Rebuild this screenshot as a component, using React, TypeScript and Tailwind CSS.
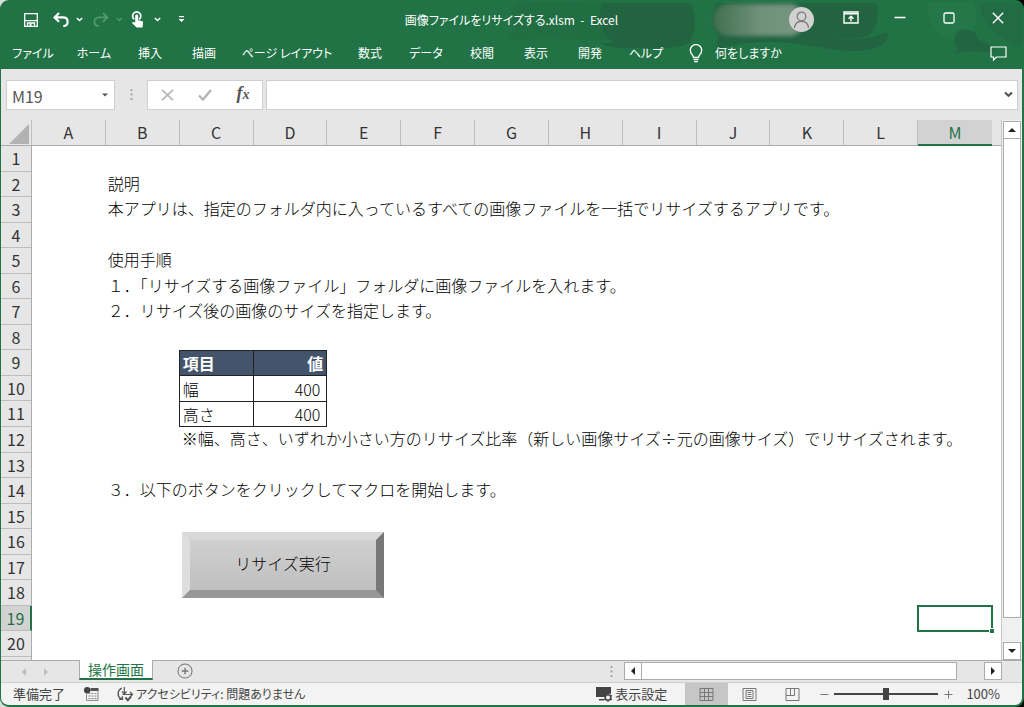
import type { ReactNode } from "react";

const COLUMNS = ["A", "B", "C", "D", "E", "F", "G", "H", "I", "J", "K", "L", "M"];
const ROWS = Array.from({ length: 20 }, (_, i) => i + 1);

const MENU = [
    { label: "ファイル", width: "w-16" },
    { label: "ホーム", width: "w-[58px]" },
    { label: "挿入", width: "w-[54px]" },
    { label: "描画", width: "w-[54px]" },
    { label: "ページ レイアウト", width: "w-28" },
    { label: "数式", width: "w-[54px]" },
    { label: "データ", width: "w-[58px]" },
    { label: "校閲", width: "w-[54px]" },
    { label: "表示", width: "w-[54px]" },
    { label: "開発", width: "w-[54px]" },
    { label: "ヘルプ", width: "w-[58px]" },
];

const NOTES = [
    { text: "説明", cell: "row-start-2 col-start-2" },
    { text: "本アプリは、指定のフォルダ内に入っているすべての画像ファイルを一括でリサイズするアプリです。", cell: "row-start-3 col-start-2" },
    { text: "使用手順", cell: "row-start-5 col-start-2" },
    { text: "１．「リサイズする画像ファイル」フォルダに画像ファイルを入れます。", cell: "row-start-6 col-start-2" },
    { text: "２．リサイズ後の画像のサイズを指定します。", cell: "row-start-7 col-start-2" },
    { text: "※幅、高さ、いずれか小さい方のリサイズ比率（新しい画像サイズ÷元の画像サイズ）でリサイズされます。", cell: "row-start-12 col-start-3" },
    { text: "３．以下のボタンをクリックしてマクロを開始します。", cell: "row-start-14 col-start-2" },
];

const IconButton = ({ label, className, children }: { label: string; className: string; children: ReactNode }) => (
    <button type="button" aria-label={label} className={`flex shrink-0 items-center justify-center ${className}`}>
        {children}
    </button>
);

const Chevron = () => (
    <svg width="7" height="5" viewBox="0 0 7 5" fill="none" stroke="currentColor" strokeWidth="1.4">
        <path d="M.8 1l2.7 2.6L6.2 1" />
    </svg>
);

const Triangle = ({ d }: { d: string }) => (
    <svg width="10" height="10" viewBox="0 0 10 10" fill="currentColor">
        <path d={d} />
    </svg>
);

const UP = "M1 7l4-4 4 4z";
const DOWN = "M1 3l4 4 4-4z";
const LEFT = "M7 1L3 5l4 4z";
const RIGHT = "M3 1l4 4-4 4z";

const Grip = () => (
    <svg width="3" height="13" viewBox="0 0 3 13" fill="#a6a6a6">
        <rect x=".5" y="1" width="2" height="2" />
        <rect x=".5" y="5.5" width="2" height="2" />
        <rect x=".5" y="10" width="2" height="2" />
    </svg>
);

const HeaderArt = () => (
    <svg className="absolute right-0 top-0 h-full w-[544px]" viewBox="480 0 544 69" preserveAspectRatio="none" fill="#22633f">
        <path d="M521 3c24-2 60 0 86 0 0 18 4 28 14 36-30 4-75-5-111 3 1-6 4-10 9-13-8-8-7-20 2-26z" opacity=".35" />
        <path d="M606 3h86c6 8 8 26-1 40-10 6-40 6-54 5-14 1-30-1-36-6 6 2 12 1 14-1-14-8-17-26-9-38z" opacity=".9" />
        <path d="M719 3h159c4 12 1 26-8 33-8 3-22 3-34 1 12 5 36 2 50-4 5-1 5 2 3 6-5 8-14 11-26 12-34 2-68-14-112-8-12 1-24 3-31 8-1-6-1-10 0-14-7-10-9-22-1-34z" opacity=".9" />
        <path d="M956 54c4-3 4-6 1-9-4-20 21-21 23-5 6 1 10 5 20 10-15 4-31-1-44 4z" opacity=".8" />
        <path d="M930 3h45c6 10 4 22-2 28-10-4-20 0-20 10-14-8-26-22-23-38z" fill="#247a4b" opacity=".6" />
        <path d="M982 3h42v44c-20-6-42-22-42-44z" opacity=".45" />
    </svg>
);

const TitleBar = () => (
    <div className="relative flex h-[39px] items-center text-white">
        <div className="flex flex-1 items-center pl-5">
            <IconButton label="上書き保存" className="h-6 w-5">
                <svg width="16" height="16" viewBox="0 0 16 16" fill="none" stroke="currentColor" strokeWidth="1.3">
                    <path d="M1.7 1.7h12.6v12.6H1.7zM2 8.6h12M4.5 14v-3h7v3" />
                    <path d="M6.5 11.5h2V14h-2z" fill="currentColor" stroke="none" />
                </svg>
            </IconButton>
            <IconButton label="元に戻す" className="ml-3 h-6 w-4">
                <svg width="16" height="16" viewBox="0 0 16 16" fill="none" stroke="currentColor" strokeWidth="2.2">
                    <path d="M6 1L1.6 5.4 6 9.8M2 5.4h8c3 0 4.6 1.9 4.6 4.3S13 14 10.3 14" />
                </svg>
            </IconButton>
            <IconButton label="元に戻すの一覧" className="ml-[2px] h-6 w-4"><Chevron /></IconButton>
            <IconButton label="やり直し" className="ml-[6px] h-6 w-4 text-[#4f9a6e]">
                <svg width="16" height="16" viewBox="0 0 16 16" fill="none" stroke="currentColor" strokeWidth="1.8">
                    <path d="M10 1l4.4 4.4L10 9.8M14 5.4H6C3 5.4 1.4 7.3 1.4 9.7S3 14 5.7 14" />
                </svg>
            </IconButton>
            <IconButton label="やり直しの一覧" className="ml-[2px] h-6 w-4 text-[#4f9a6e]"><Chevron /></IconButton>
            <IconButton label="タッチ/マウス モードの切り替え" className="ml-[3px] h-6 w-4">
                <svg width="14" height="17" viewBox="0 0 14 17" fill="currentColor">
                    <path d="M3.2 8.3a4.1 4.1 0 1 1 5 0" fill="none" stroke="currentColor" strokeWidth="1.7" />
                    <path d="M4.2 5c0-2 3-2 3 0v4.2l3.6.8c1 .3 1.4.9 1.3 1.9l-.6 4.6H5.6L1.3 12.2c-.5-.7.5-1.6 1.4-1.1l1.5.6z" />
                </svg>
            </IconButton>
            <IconButton label="モードの一覧" className="ml-[3px] h-6 w-4"><Chevron /></IconButton>
            <IconButton label="クイック アクセス ツール バーのユーザー設定" className="ml-2 h-6 w-4">
                <svg width="7" height="7" viewBox="0 0 7 7" fill="currentColor">
                    <path d="M1 0h5v1.2H1zM.5 3h6l-3 3z" />
                </svg>
            </IconButton>
        </div>
        <h1 className="mr-5 whitespace-pre text-xs [font-feature-settings:'palt']">画像ファイルをリサイズする.xlsm  -  Excel</h1>
        <div className="flex flex-1 items-center justify-end">
            <div className="-mr-4 h-8 w-[92px] rounded-full bg-gradient-to-r from-[#41704f] via-[#6f9079] to-[#799780] blur-[2px]" />
            <IconButton label="アカウント" className="relative h-[25px] w-[25px] rounded-full bg-[#d2d2d2] text-[#777]">
                <svg width="17" height="18" viewBox="0 0 17 18" fill="none" stroke="currentColor" strokeWidth="1.2">
                    <circle cx="8.5" cy="5.5" r="4.3" />
                    <path d="M1.5 17c.3-4.2 3.2-6.6 7-6.6s6.7 2.4 7 6.6" />
                </svg>
            </IconButton>
            <div className="flex pb-1 pl-3">
                <IconButton label="リボンの表示オプション" className="h-8 w-[49px]">
                    <svg width="16" height="13" viewBox="0 0 16 13" fill="none" stroke="currentColor" strokeWidth="1.4">
                        <path d="M1 1h14v11H1zM1 2.8h14M8 10.5v-5M5.5 7.8L8 5.3l2.5 2.5" />
                    </svg>
                </IconButton>
                <IconButton label="最小化" className="h-8 w-[49px]">
                    <svg width="12" height="12" viewBox="0 0 12 12" stroke="currentColor" strokeWidth="1.3"><path d="M.5 5.5h11" /></svg>
                </IconButton>
                <IconButton label="最大化" className="h-8 w-[49px]">
                    <svg width="12" height="12" viewBox="0 0 12 12" fill="none" stroke="currentColor" strokeWidth="1.3"><rect x="1" y="1" width="10" height="10" rx="1.5" /></svg>
                </IconButton>
                <IconButton label="閉じる" className="h-8 w-[49px]">
                    <svg width="12" height="12" viewBox="0 0 12 12" stroke="currentColor" strokeWidth="1.4"><path d="M.8.8l10.4 10.4M11.2.8L.8 11.2" /></svg>
                </IconButton>
            </div>
        </div>
    </div>
);

const MenuBar = () => (
    <nav className="relative flex h-[30px] items-center pb-[2px] text-xs text-white [font-feature-settings:'palt']">
        {MENU.map((item) => (
            <button key={item.label} type="button" className={`h-full shrink-0 whitespace-nowrap ${item.width}`}>
                {item.label}
            </button>
        ))}
        <button type="button" className="ml-[14px] flex items-center gap-3 whitespace-nowrap">
            <svg width="14" height="19" viewBox="0 0 14 19" fill="none" stroke="currentColor" strokeWidth="1.3">
                <path d="M4.5 13.5c0-2.5-3.2-3.5-3.2-7.2a5.7 5.7 0 0 1 11.4 0c0 3.7-3.2 4.7-3.2 7.2zM4.5 15.7h5M5.2 17.7h3.6" />
            </svg>
            何をしますか
        </button>
        <IconButton label="コメント" className="ml-auto mr-2 h-6 w-8">
            <svg width="17" height="15" viewBox="0 0 17 15" fill="none" stroke="currentColor" strokeWidth="1.2">
                <path d="M1 1h15v10H6.5l-3 3v-3H1z" />
            </svg>
        </IconButton>
    </nav>
);

const FormulaBar = () => (
    <div className="flex h-[51px] items-center bg-[#e6e6e6] pl-[5px] pr-1 text-[#555]">
        <div className="flex h-[30px] w-[109px] items-center border border-[#cfcfcf] bg-white">
            <input aria-label="名前ボックス" defaultValue="M19" className="w-20 grow pl-[5px] pt-[3px] text-base outline-none" />
            <IconButton label="名前の一覧" className="h-full w-[18px]">
                <svg width="6" height="4" viewBox="0 0 6 4" fill="currentColor"><path d="M0 .5h6l-3 3z" /></svg>
            </IconButton>
        </div>
        <div className="flex w-8 justify-center"><Grip /></div>
        <div className="flex h-[30px] items-center border border-[#cfcfcf] bg-white">
            <IconButton label="キャンセル" className="h-full w-[38px] text-[#b5b5b5]">
                <svg width="13" height="12" viewBox="0 0 13 12" stroke="currentColor" strokeWidth="1.7"><path d="M1 .8l11 10.4M12 .8L1 11.2" /></svg>
            </IconButton>
            <IconButton label="入力" className="h-full w-[38px] text-[#b5b5b5]">
                <svg width="14" height="12" viewBox="0 0 14 12" fill="none" stroke="currentColor" strokeWidth="2.4"><path d="M1 6.5l4 4L13 1" /></svg>
            </IconButton>
            <button type="button" aria-label="関数の挿入" className="h-full w-[38px] font-['Liberation_Serif',serif] text-lg font-bold italic leading-none">
                f<span className="text-sm">x</span>
            </button>
        </div>
        <div className="ml-[3px] flex h-[30px] flex-1 items-center border border-[#cfcfcf] bg-white">
            <input aria-label="数式バー" className="min-w-0 flex-1 px-2 text-base outline-none" />
            <IconButton label="数式バーの展開" className="h-full w-[18px]">
                <svg width="9" height="7" viewBox="0 0 9 7" fill="none" stroke="currentColor" strokeWidth="2.2"><path d="M1 1.5l3.5 3.3L8 1.5" /></svg>
            </IconButton>
        </div>
    </div>
);

const ColumnHeaders = () => (
    <div className="grid h-[26px] shrink-0 grid-cols-[31px_repeat(13,minmax(0,1fr))_9px] border-b border-[#ababab] bg-[#e6e6e6] text-base leading-6 text-[#333]">
        <div className="flex items-end justify-end border-r border-[#c0c0c0] pb-px pr-[2px]">
            <svg width="20" height="20" viewBox="0 0 20 20" fill="#b2b2b2"><path d="M20 0v20H0z" /></svg>
        </div>
        {COLUMNS.map((name) => (
            <div
                key={name}
                className={name === "M" ? "-mb-px border-b-2 border-[#217346] bg-[#d2d2d2] text-center text-[#217346]" : "border-r border-[#bdbdbd] text-center"}
            >
                {name}
            </div>
        ))}
    </div>
);

const SizeTable = () => (
    <table className="col-span-2 col-start-3 row-span-3 row-start-9 -ml-px table-fixed border-collapse self-stretch">
        <thead>
            <tr className="bg-[#44546a] text-left font-bold text-white">
                <th className="border border-[#222] px-[3px] py-0">項目</th>
                <th className="border border-[#222] px-[3px] py-0 text-right">値</th>
            </tr>
        </thead>
        <tbody className="font-light">
            <tr>
                <td className="border border-[#222] px-[3px] py-0">幅</td>
                <td className="border border-[#222] px-[6px] py-0 text-right">400</td>
            </tr>
            <tr>
                <td className="border border-[#222] px-[3px] py-0">高さ</td>
                <td className="border border-[#222] px-[6px] py-0 text-right">400</td>
            </tr>
        </tbody>
    </table>
);

const Sheet = () => (
    <div className="flex min-h-0 flex-1">
        <div className="grid w-[31px] shrink-0 grid-rows-[repeat(20,minmax(0,1fr))_3px] border-r border-[#ababab] bg-[#e6e6e6] text-base leading-6 text-[#333]">
            {ROWS.map((n) => (
                <div
                    key={n}
                    className={n === 19 ? "-mr-px border-b border-r-2 border-b-[#bdbdbd] border-r-[#217346] bg-[#d2d2d2] text-center text-[#217346]" : "border-b border-[#bdbdbd] text-center"}
                >
                    {n}
                </div>
            ))}
        </div>
        <div className="grid min-w-0 flex-1 grid-cols-[repeat(13,minmax(0,1fr))_9px] grid-rows-[repeat(20,minmax(0,1fr))_3px] bg-white text-base leading-6 text-black">
            {NOTES.map((note) => (
                <p key={note.text} className={`whitespace-nowrap pl-[2px] font-light leading-[22px] ${note.cell}`}>
                    {note.text}
                </p>
            ))}
            <SizeTable />
            <button
                type="button"
                className="col-span-3 col-start-3 row-span-3 row-start-16 mb-2 ml-[2px] mr-[17px] mt-[3px] border-8 border-b-[#979797] border-l-[#dedede] border-r-[#777] border-t-[#d8d8d8] bg-gradient-to-b from-[#d0d0d0] to-[#bfbfbf] pb-1 font-light"
            >
                リサイズ実行
            </button>
            <div className="relative col-start-13 row-start-19 -m-px border-2 border-[#217346]">
                <span className="absolute -bottom-[3px] -right-[3px] h-[5px] w-[5px] border-l border-t border-white bg-[#217346]" />
            </div>
        </div>
    </div>
);

const SCROLL_BUTTON = "h-[18px] w-[18px] border border-[#ababab] bg-white text-[#222]";

const VerticalScroll = () => (
    <div className="flex w-[21px] shrink-0 flex-col items-center border-l border-[#c6c6c6] bg-[#f0f0f0] pt-px pr-px">
        <IconButton label="上へスクロール" className={SCROLL_BUTTON}><Triangle d={UP} /></IconButton>
        <div className="w-[18px] flex-1 border border-t-0 border-[#ababab] bg-white" />
        <div className="h-6" />
        <IconButton label="下へスクロール" className={SCROLL_BUTTON}><Triangle d={DOWN} /></IconButton>
    </div>
);

const SheetTabs = () => (
    <div className="flex h-[22px] shrink-0 border-t border-[#ababab] bg-[#e6e6e6]">
        <div className="flex w-[78px] items-center gap-3 pl-[18px] text-[#bdbdbd]">
            <IconButton label="前のシート" className="h-4 w-[10px]"><Triangle d={LEFT} /></IconButton>
            <IconButton label="次のシート" className="h-4 w-[10px]"><Triangle d={RIGHT} /></IconButton>
        </div>
        <button type="button" className="-mt-px h-5 border-x border-b-2 border-x-[#ababab] border-b-[#217346] bg-white px-2 text-sm leading-4 text-[#217346]">
            操作画面
        </button>
        <IconButton label="新しいシート" className="ml-6 h-5 w-4 text-[#777]">
            <svg width="16" height="16" viewBox="0 0 17 17" fill="none" stroke="currentColor" strokeWidth="1.1">
                <circle cx="8.5" cy="8.5" r="7.5" />
                <path d="M8.5 5v7M5 8.5h7" strokeWidth="1.5" />
            </svg>
        </IconButton>
        <div className="ml-auto mr-[11px] flex h-5 items-center"><Grip /></div>
        <div className="mr-5 mt-px flex w-[37%]">
            <IconButton label="左へスクロール" className={SCROLL_BUTTON}><Triangle d={LEFT} /></IconButton>
            <div className="h-[18px] flex-1 border border-l-0 border-[#ababab] bg-white" />
            <div className="w-[27px]" />
            <IconButton label="右へスクロール" className={SCROLL_BUTTON}><Triangle d={RIGHT} /></IconButton>
        </div>
    </div>
);

const StatusBar = () => (
    <div className="flex h-[23px] shrink-0 items-center border-t border-[#cfcfcf] bg-[#f3f3f3] text-[13px] text-[#444] [font-feature-settings:'palt']">
        <span className="ml-3">準備完了</span>
        <IconButton label="マクロの記録" className="ml-[18px] h-5 w-4">
            <svg width="15" height="14" viewBox="0 0 15 14" fill="none" stroke="#888">
                <path d="M2.5 6.5v6.900H14V3" />
                <path d="M6.5 2.500H14.500" stroke="#555" strokeWidth="3" />
                <path d="M4.500 6.500h8M4.500 9h8M4.500 11.500h8" strokeDasharray="2 1" />
                <circle cx="3.200" cy="3.200" r="3.200" fill="#444" stroke="none" />
            </svg>
        </IconButton>
        <button type="button" className="ml-[18px] flex items-center gap-[2px] whitespace-nowrap text-xs">
            <svg width="17" height="16" viewBox="0 0 17 16" fill="none" stroke="#555" strokeWidth="1.4">
                <path d="M4.800 2.200C0 4.500 0 11 4.500 12.800M2.200 13.200h3.200v-3" />
                <path d="M7.300 1v6.500M5 5.500l2.300 2.300 2.300-2.300M5.500 8.500h10M13 6l2.500 2.500L13 11" strokeWidth="1.2" />
                <path d="M8.500 11.500l2.300 2.800 3.200-3.800" strokeWidth="2" />
            </svg>
            アクセシビリティ: 問題ありません
        </button>
        <button type="button" className="ml-auto flex items-center gap-[2px] whitespace-nowrap">
            <svg width="17" height="15" viewBox="0 0 17 15" fill="#444">
                <path d="M0 0h15v7a5 5 0 0 0-6 3H0zM3 12h5v1.5H3z" />
                <circle cx="12" cy="10.5" r="2.8" fill="none" stroke="#444" strokeWidth="1.6" />
                <path d="M12 6v9M7.8 8.2l8.4 4.6M7.8 12.8l8.4-4.6" stroke="#444" strokeWidth="1.2" strokeDasharray="1.8 5.6" />
            </svg>
            表示設定
        </button>
        <IconButton label="標準" className="ml-[18px] h-full w-[43px] bg-[#c6c6c6]">
            <svg width="15" height="15" viewBox="0 0 15 15" fill="none" stroke="#777"><path d="M1 1.5h13v12H1zM5.5 1.5v12M9.5 1.5v12M1 5.5h13M1 9.5h13" /></svg>
        </IconButton>
        <IconButton label="ページ レイアウト" className="h-full w-[43px]">
            <svg width="15" height="15" viewBox="0 0 15 15" fill="none" stroke="#777"><path d="M1 1.5h13v12H1zM4 3.5h7v8H4zM5.5 5.5h4M5.5 7.5h4M5.5 9.5h4" /></svg>
        </IconButton>
        <IconButton label="改ページ プレビュー" className="h-full w-[43px]">
            <svg width="15" height="15" viewBox="0 0 15 15" fill="none" stroke="#777"><path d="M1 1.5h13v12H1zM5.5 1.5v7M9.5 1.5v7M1 8.5h8.5" /></svg>
        </IconButton>
        <IconButton label="縮小" className="h-full w-5">
            <svg width="9" height="9" viewBox="0 0 9 9" stroke="#777"><path d="M.5 4.5h8" /></svg>
        </IconButton>
        <input
            type="range"
            aria-label="ズーム"
            min="0"
            max="100"
            defaultValue="50"
            className="h-[2px] w-[104px] appearance-none bg-[#444] [&::-webkit-slider-thumb]:h-3 [&::-webkit-slider-thumb]:w-[6px] [&::-webkit-slider-thumb]:appearance-none [&::-webkit-slider-thumb]:bg-[#444]"
        />
        <IconButton label="拡大" className="h-full w-5">
            <svg width="9" height="9" viewBox="0 0 9 9" stroke="#777"><path d="M.5 4.5h8M4.5.5v8" /></svg>
        </IconButton>
        <button type="button" className="ml-2 mr-[22px] text-[13px]">100%</button>
    </div>
);

const App = () => {
    return (
        <div className="h-screen min-h-[500px] bg-[linear-gradient(to_right,#dcdcdc_50%,#000_50%)] font-['Noto_Sans_CJK_JP','Liberation_Sans',sans-serif]">
            <div className="flex h-full flex-col overflow-hidden rounded-[9px] border border-b-2 border-r-2 border-t-0 border-[#217346] bg-[#217346]">
                <header className="relative shrink-0">
                    <HeaderArt />
                    <TitleBar />
                    <MenuBar />
                </header>
                <FormulaBar />
                <main className="flex min-h-0 flex-1">
                    <div className="flex min-w-0 flex-1 flex-col">
                        <ColumnHeaders />
                        <Sheet />
                    </div>
                    <VerticalScroll />
                </main>
                <SheetTabs />
                <StatusBar />
            </div>
        </div>
    );
};

export default App;
